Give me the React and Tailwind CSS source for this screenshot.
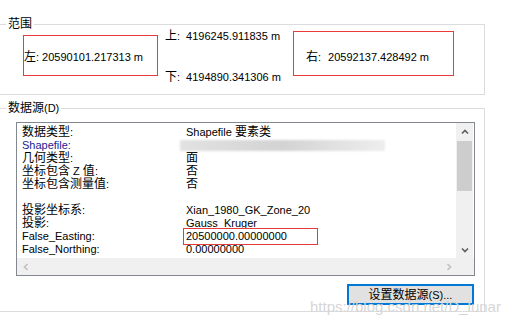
const CJK = /([\u3400-\u9fff]+)/

// mixed text: CJK runs a bit bigger than the latin runs, like the dialog font
function T({ text }) {
  return text.split(CJK).map((part, i) =>
    CJK.test(part)
      ? <span key={i} className="text-[12px]">{part}</span>
      : <span key={i}>{part}</span>
  )
}

function Chevron({ dir, color = '#606060' }) {
  const pts = {
    up: '1,5.5 4,2.5 7,5.5',
    down: '1,2.5 4,5.5 7,2.5',
    left: '5.5,1 2.5,4 5.5,7',
    right: '2.5,1 5.5,4 2.5,7',
  }
  return (
    <svg width="8" height="8" viewBox="0 0 8 8">
      <polyline points={pts[dir]} fill="none" stroke={color} strokeWidth="1.7" />
    </svg>
  )
}

function Group({ label, className, children }) {
  return (
    <div className={`relative border-t border-r border-b border-[#dcdcdc] w-[485px] ${className}`}>
      <span className="absolute -top-[8px] left-[6px] bg-white px-[2px] leading-[14px]">
        <T text={label} />
      </span>
      {children}
    </div>
  )
}

const rows = [
  ['数据类型:', 'Shapefile 要素类'],
  ['Shapefile:', 'blur'],
  ['几何类型:', '面'],
  ['坐标包含 Z 值:', '否'],
  ['坐标包含测量值:', '否'],
  ['', ''],
  ['投影坐标系:', 'Xian_1980_GK_Zone_20'],
  ['投影:', 'Gauss_Kruger'],
  ['False_Easting:', '20500000.00000000'],
  ['False_Northing:', '0.00000000'],
]

export default function App() {
  return (
    <div className="relative w-[521px] h-[325px] overflow-hidden bg-white text-black text-[11px] font-['Liberation_Sans','Noto_Sans_CJK_SC',sans-serif]">
      {/* 范围 */}
      <Group label="范围" className="mt-[24px] h-[71px]">
        <div className="flex items-start">
          <div className="ml-[23px] mt-[10px] w-[135px] h-[41px] bg-white shadow-[inset_0_0_0_1px_#ea3a3c] flex items-center pl-[1px] pt-[3px] leading-[14px]">
            <T text="左:" />
            <span className="ml-[3px]">20590101.217313 m</span>
          </div>
          <div className="ml-[7px] mt-[4px] w-[128px] h-[55px] flex flex-col justify-between leading-[14px]">
            <div>
              <T text="上:" />
              <span className="ml-[6px]">4196245.911835 m</span>
            </div>
            <div>
              <T text="下:" />
              <span className="ml-[6px]">4194890.341306 m</span>
            </div>
          </div>
          <div className="mt-[6px] w-[161px] h-[45px] bg-white shadow-[inset_0_0_0_1px_#ea3a3c] flex items-center pl-[13px] pt-[7px] leading-[14px]">
            <T text="右:" />
            <span className="ml-[7px]">20592137.428492 m</span>
          </div>
        </div>
      </Group>

      {/* 数据源 */}
      <Group label="数据源(D)" className="mt-[13px] h-[204px]">
        <div className="flex flex-col">
          <div className="ml-[16px] mt-[13px] w-[459px] h-[154px] border border-[#828790] flex flex-col">
            <div className="flex h-[135px]">
              <div className="w-[439px] overflow-hidden pt-[3px] pl-[5px]">
                {rows.map(([label, value], i) => (
                  <div key={i} className="flex h-[13px] items-center leading-[13px] whitespace-nowrap">
                    <div className={`w-[164px] ${label === 'Shapefile:' ? 'text-[#1b1b8f]' : ''}`}>
                      <T text={label} />
                    </div>
                    {value === 'blur' ? (
                      <div className="-ml-[6px] h-[11px] w-[205px] blur-[1px] bg-gradient-to-r from-[#e2e2e2] via-[#d3d3d3] to-[#eeeeee]" />
                    ) : value === '20500000.00000000' ? (
                      <div className="-ml-[3px] h-[17px] w-[135px] border border-solid border-[#e5393b] pl-[2px] flex items-center">
                        {value}
                      </div>
                    ) : (
                      <div><T text={value} /></div>
                    )}
                  </div>
                ))}
              </div>
              <div className="w-[17px] bg-[#f0f0f0] flex flex-col">
                <div className="h-[17px] flex items-center justify-center pt-[1px]">
                  <Chevron dir="up" />
                </div>
                <div className="mx-[1px] mt-[1px] h-[50px] bg-[#cdcdcd]" />
                <div className="flex-1" />
                <div className="h-[17px] flex items-center justify-center">
                  <Chevron dir="down" />
                </div>
              </div>
            </div>
            <div className="h-[17px] bg-[#f0f0f0] flex items-center">
              <div className="w-[17px] flex justify-center"><Chevron dir="left" color="#c2c2c2" /></div>
              <div className="flex-1" />
              <div className="w-[17px] flex justify-center"><Chevron dir="right" color="#c2c2c2" /></div>
              <div className="w-[17px]" />
            </div>
          </div>
          <button className="self-end mr-[10px] mt-[8px] w-[127px] h-[21px] border-2 border-[#0078d7] bg-[#e1e1e1] leading-[14px] flex items-center justify-center">
            <T text="设置数据源(S)..." />
          </button>
        </div>
      </Group>

      {/* watermark */}
      <div className="absolute left-[310px] top-[297px] text-[15px] leading-[20px] text-[#d6d6d6] whitespace-nowrap">
        https://blog.csdn.net/D_lunar
      </div>
    </div>
  )
}
